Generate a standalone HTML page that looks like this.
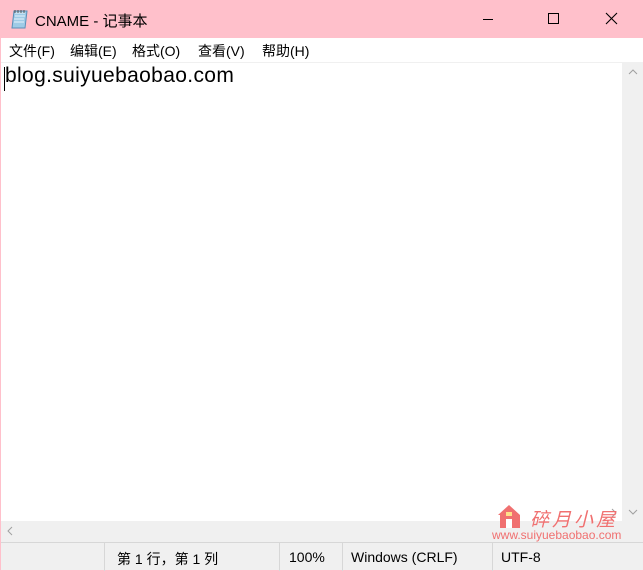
<!DOCTYPE html>
<html><head><meta charset="utf-8"><style>
*{margin:0;padding:0;box-sizing:border-box}
body{width:644px;height:571px;overflow:hidden;background:#ffc0cb;font-family:"Liberation Sans","Noto Sans CJK SC",sans-serif;position:relative}
.abs{position:absolute}
.title{left:0;top:0;width:644px;height:38px;background:#ffc0cb}
.menu{left:1px;top:38px;width:642px;height:24px;background:#fff;font-size:14px;color:#000}
.menu span{position:absolute;top:3px}
.edit{left:1px;top:62px;width:621px;height:459px;background:#fff;border-top:1px solid #f0f0f0}
.vs{left:622px;top:62px;width:21px;height:459px;background:#f0f0f0}
.hs{left:1px;top:521px;width:642px;height:21px;background:#f0f0f0}
.status{left:1px;top:542px;width:642px;height:28px;background:#f0f0f0;border-top:1px solid #d7d7d7;font-size:14px}
.status span{position:absolute;top:6px}
.sep{position:absolute;top:0;width:1px;height:28px;background:#d7d7d7}
</style></head><body>
<div class="abs title">
<svg class="abs" style="left:11px;top:9px" width="19" height="20" viewBox="0 0 19 20"><path d="M3 2h13l-2 17H1z" fill="#9ecbe6" stroke="#5a8fb8"/><path d="M4 4h10M4 7h10M3 10h10M3 13h10" stroke="#e6f2fa" stroke-width="1"/><path d="M4 1v3M7 1v3M10 1v3M13 1v3" stroke="#555"/></svg>
<span class="abs" style="left:35px;top:10px;font-size:15px;color:#000">CNAME - 记事本</span>
<div class="abs" style="left:483px;top:19px;width:10px;height:1px;background:#000"></div>
<div class="abs" style="left:548px;top:13px;width:11px;height:11px;border:1px solid #000"></div>
<svg class="abs" style="left:605px;top:12px" width="13" height="13"><path d="M1 1L12 12M12 1L1 12" stroke="#000" stroke-width="1.1"/></svg>
</div>
<div class="abs menu"><span style="left:8px">文件(F)</span><span style="left:69px">编辑(E)</span><span style="left:131px">格式(O)</span><span style="left:197px">查看(V)</span><span style="left:261px">帮助(H)</span></div>
<div class="abs edit"><div class="abs" style="left:3px;top:4px;width:1px;height:24px;background:#000"></div><span class="abs" style="left:4px;top:1px;font-size:21px;letter-spacing:0.35px;color:#000">blog.suiyuebaobao.com</span></div>
<div class="abs vs"><svg class="abs" style="left:6px;top:7px" width="10" height="6"><path d="M1 5L5 1L9 5" stroke="#a0a0a0" fill="none"/></svg><svg class="abs" style="left:6px;top:447px" width="10" height="6"><path d="M1 1L5 5L9 1" stroke="#a0a0a0" fill="none"/></svg></div>
<div class="abs hs"><svg class="abs" style="left:6px;top:5px" width="6" height="10"><path d="M5 1L1 5L5 9" stroke="#a0a0a0" fill="none"/></svg><svg class="abs" style="left:610px;top:-13px" width="6" height="10"><path d="M1 1L5 5L1 9" stroke="#a0a0a0" fill="none"/></svg></div>
<div class="abs status">
<div class="sep" style="left:103px"></div><div class="sep" style="left:278px"></div><div class="sep" style="left:341px"></div><div class="sep" style="left:491px"></div>
<span style="left:116px">第 1 行，第 1 列</span><span style="left:288px">100%</span><span style="left:350px">Windows (CRLF)</span><span style="left:500px">UTF-8</span>
</div>
<svg class="abs" style="left:496px;top:503px" width="28" height="26"><path d="M2 12L13 2L24 12V25H4V12z" fill="#f07070"/><rect x="10" y="16" width="6" height="9" fill="#fff"/><rect x="10" y="9" width="6" height="4" fill="#ffe08a"/></svg>
<span class="abs" style="left:530px;top:505px;font-size:19px;color:#f07070;letter-spacing:3px;font-style:italic">碎月小屋</span>
<span class="abs" style="left:492px;top:528px;font-size:12px;color:#f07070">www.suiyuebaobao.com</span>
</body></html>
